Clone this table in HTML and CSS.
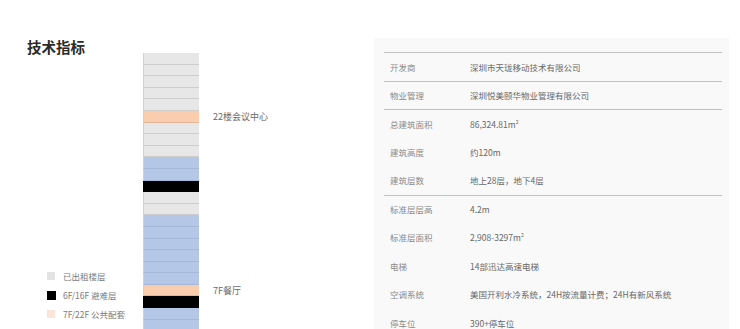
FILE: index.html
```html
<!DOCTYPE html>
<html lang="zh-CN">
<head>
    <meta charset="UTF-8">
    <meta name="viewport" content="width=device-width, initial-scale=1.0">
    <title>技术指标</title>
    <link rel="stylesheet" href="styles.css">
</head>
<body>
    <div class="page">
        <!-- Title and legend -->
        <section class="intro">
            <h1>技术指标</h1>
            <ul class="legend">
                <li><span class="swatch leased"></span>已出租楼层</li>
                <li><span class="swatch refuge"></span>6F/16F 避难层</li>
                <li><span class="swatch public"></span>7F/22F 公共配套</li>
            </ul>
        </section>

        <!-- Floor stack, 27F down -->
        <section class="tower">
            <div class="floor"><span class="block leased"></span></div>
            <div class="floor"><span class="block leased"></span></div>
            <div class="floor"><span class="block leased"></span></div>
            <div class="floor"><span class="block leased"></span></div>
            <div class="floor"><span class="block leased"></span></div>
            <div class="floor"><span class="block public"></span><span class="floor-label">22楼会议中心</span></div>
            <div class="floor"><span class="block leased"></span></div>
            <div class="floor"><span class="block leased"></span></div>
            <div class="floor"><span class="block leased"></span></div>
            <div class="floor"><span class="block vacant"></span></div>
            <div class="floor"><span class="block vacant"></span></div>
            <div class="floor"><span class="block refuge"></span></div>
            <div class="floor"><span class="block leased"></span></div>
            <div class="floor"><span class="block leased"></span></div>
            <div class="floor"><span class="block vacant"></span></div>
            <div class="floor"><span class="block vacant"></span></div>
            <div class="floor"><span class="block vacant"></span></div>
            <div class="floor"><span class="block vacant"></span></div>
            <div class="floor"><span class="block vacant"></span></div>
            <div class="floor"><span class="block vacant"></span></div>
            <div class="floor"><span class="block public"></span><span class="floor-label">7F餐厅</span></div>
            <div class="floor"><span class="block refuge"></span></div>
            <div class="floor"><span class="block vacant"></span></div>
            <div class="floor"><span class="block vacant"></span></div>
        </section>

        <!-- Spec table -->
        <section class="specs">
            <div class="spec-row ruled"><span class="spec-name">开发商</span><span class="spec-value">深圳市天珑移动技术有限公司</span></div>
            <div class="spec-row ruled"><span class="spec-name">物业管理</span><span class="spec-value">深圳悦美颐华物业管理有限公司</span></div>
            <div class="spec-row ruled"><span class="spec-name">总建筑面积</span><span class="spec-value">86,324.81m<sup>2</sup></span></div>
            <div class="spec-row"><span class="spec-name">建筑高度</span><span class="spec-value">约120m</span></div>
            <div class="spec-row"><span class="spec-name">建筑层数</span><span class="spec-value">地上28层，地下4层</span></div>
            <div class="spec-row ruled"><span class="spec-name">标准层层高</span><span class="spec-value">4.2m</span></div>
            <div class="spec-row"><span class="spec-name">标准层面积</span><span class="spec-value">2,908-3297m<sup>2</sup></span></div>
            <div class="spec-row"><span class="spec-name">电梯</span><span class="spec-value">14部迅达高速电梯</span></div>
            <div class="spec-row"><span class="spec-name">空调系统</span><span class="spec-value">美国开利水冷系统，24H按流量计费；24H有新风系统</span></div>
            <div class="spec-row"><span class="spec-name">停车位</span><span class="spec-value">390+停车位</span></div>
        </section>
    </div>
</body>
</html>
```

FILE: styles.css
```css
/* General */
html, body {
    margin: 0;
    padding: 0;
    background: #fff;
}
body {
    font-family: "Noto Sans CJK SC", "Noto Sans", sans-serif;
    color: #666;
    overflow: hidden;
}
.page {
    display: flex;
    width: 740px;
    height: 329px;
    overflow: hidden;
}

/* Title + legend */
.intro {
    width: 143px;
    box-sizing: border-box;
    padding: 37px 0 0 27px;
    display: flex;
    flex-direction: column;
}
.intro h1 {
    margin: 0;
    font-size: 14.5px;
    line-height: 20px;
    font-weight: 700;
    color: #2b2b2b;
}
.legend {
    list-style: none;
    margin: 210px 0 0 20px;
    padding: 0;
    display: flex;
    flex-direction: column;
    gap: 1px;
}
.legend li {
    display: flex;
    align-items: center;
    height: 18px;
    font-size: 8.5px;
    color: #7a7a7a;
    white-space: nowrap;
}
.swatch {
    width: 8px;
    height: 8px;
    margin-right: 8px;
    flex: none;
}
.swatch.leased { background: #e3e3e3; }
.swatch.refuge { background: #000; width: 9px; height: 9px; margin-right: 7px; }
.swatch.public { background: #fbe4d8; }

/* Floor stack */
.tower {
    width: 231px;
    padding-top: 53px;
    display: flex;
    flex-direction: column;
}
.floor {
    display: flex;
    align-items: center;
    height: 11.6px;
    flex: none;
}
.block {
    width: 56px;
    height: 100%;
    box-sizing: border-box;
    border-left: 1px solid #d2d2d2;
    border-bottom: 1px solid rgba(0, 0, 0, 0.11);
}
.block.leased { background: #e7e7e7; }
.block.public { background: #fbcdaf; }
.block.vacant { background: #b4c7e7; border-bottom-color: rgba(60, 80, 120, 0.13); }
.block.refuge { background: #000; border-color: #000; }
.floor-label {
    margin-left: 14px;
    font-size: 9px;
    color: #6a6a6a;
    white-space: nowrap;
}

/* Spec table */
.specs {
    width: 355px;
    margin-top: 38px;
    box-sizing: border-box;
    padding: 14px 7px 0 10px;
    background: #f9f9f9;
}
.spec-row {
    display: flex;
    align-items: center;
    height: 28.5px;
    box-sizing: border-box;
    padding-left: 6px;
    font-size: 8.5px;
    white-space: nowrap;
}
.spec-row.ruled {
    border-top: 1px solid #c2c2c2;
}
.spec-name {
    width: 80px;
    color: #8a8a8a;
}
.spec-value {
    color: #686868;
}
.spec-value sup {
    font-size: 5px;
    vertical-align: 4px;
}
```
